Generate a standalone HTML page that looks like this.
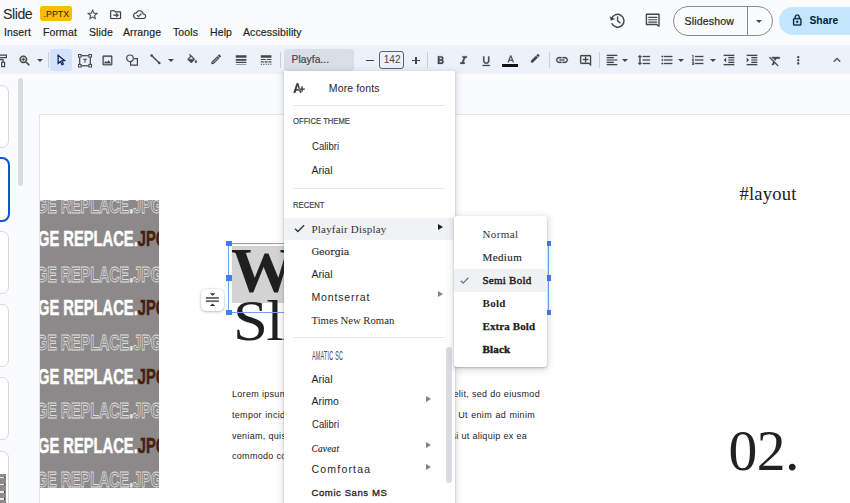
<!DOCTYPE html>
<html><head><meta charset="utf-8">
<style>
*{box-sizing:border-box;margin:0;padding:0}
html,body{width:850px;height:503px;overflow:hidden;background:#f9fbfd;font-family:"Liberation Sans",sans-serif;color:#1f1f1f}
.abs{position:absolute}
.t{position:absolute;white-space:nowrap;line-height:1}
#toolbar{left:-20px;top:45.300px;width:890px;height:28.600px;background:#edf2fa}
.sep{position:absolute;top:52px;width:1px;height:16px;background:#cbced3}
.ic{position:absolute;overflow:visible}
.menu{position:absolute;background:#fff;box-shadow:0 2px 6px 2px rgba(60,64,67,.15),0 1px 2px rgba(60,64,67,.3)}
.mi{position:absolute;left:27.5px;white-space:nowrap;line-height:1;font-size:10.5px;color:#1f1f1f}
.arr{position:absolute;width:0;height:0;border-left:5px solid #1f1f1f;border-top:3px solid transparent;border-bottom:3px solid transparent}
.arr.g{border-left-color:#80868b}
.dd{position:absolute;width:0;height:0;border-top:3.200px solid #444746;border-left:3.200px solid transparent;border-right:3.200px solid transparent;margin-left:-.3px}
.thumb{position:absolute;left:-22px;width:31px;height:63px;background:#fff;border:1px solid #d5d8dc;border-radius:7px}
.row{position:absolute;left:0;white-space:nowrap;font-weight:bold;font-size:22.5px;line-height:1;transform:scaleX(.654);transform-origin:0 0;color:#fff;-webkit-text-stroke:.5px #fff}
.row.o{color:transparent;-webkit-text-stroke:0.8px #e0e0e0;transform:scaleX(.637)}
.row b{color:#4a1e0c;-webkit-text-stroke:.5px #4a1e0c}
.h{position:absolute;width:5.600px;height:5.600px;background:#3f7fe8}
.body{position:absolute;left:232px;font-size:9px;letter-spacing:.3px;line-height:1;white-space:nowrap;text-align:justify;text-align-last:justify;color:#222}
.mn{position:absolute;top:27.2px;font-size:10.5px;letter-spacing:.12px;-webkit-text-stroke:.18px #1f1f1f;white-space:nowrap;line-height:1}
</style></head><body>

<div class="t" style="left:3px;top:6.6px;font-size:14.2px;color:#1f1f1f;letter-spacing:-.45px">Slide</div>
<div class="abs" style="left:40px;top:6px;width:32px;height:15px;background:#fbbc04;border-radius:3px"></div>
<div class="t" style="left:43.6px;top:9.9px;font-size:8.8px;color:#2a2000;letter-spacing:0">.PPTX</div>
<div class="mn" style="left:4px">Insert</div>
<div class="mn" style="left:43px">Format</div>
<div class="mn" style="left:89px">Slide</div>
<div class="mn" style="left:123px">Arrange</div>
<div class="mn" style="left:173px">Tools</div>
<div class="mn" style="left:210px">Help</div>
<div class="mn" style="left:243px">Accessibility</div>
<svg class="ic" style="left:86.30px;top:8.40px;width:13.2px;height:13.2px" viewBox="0 0 24 24"><path fill="#444746" stroke="#444746" stroke-width="0.3" d="M22 9.24l-7.19-.62L12 2 9.19 8.63 2 9.24l5.46 4.73L5.82 21 12 17.27 18.18 21l-1.63-7.03L22 9.24zM12 15.4l-3.76 2.27 1-4.28-3.32-2.88 4.38-.38L12 6.1l1.71 4.04 4.38.38-3.32 2.88 1 4.28L12 15.4z"/></svg>
<svg class="ic" style="left:109.40px;top:8.00px;width:13.2px;height:13.2px" viewBox="0 0 24 24"><path fill="#444746" stroke="#444746" stroke-width="0.3" d="M20 6h-8l-2-2H4c-1.1 0-2 .9-2 2v12c0 1.1.9 2 2 2h16c1.1 0 2-.9 2-2V8c0-1.1-.9-2-2-2zm0 12H4V6h5.17l2 2H20v10zm-7.5-2.5l1.41 1.41L17.83 13l-3.92-3.91-1.41 1.41 1.5 1.5H8v2h6l-1.500 1.500z"/></svg>
<svg class="ic" style="left:133.00px;top:8.00px;width:13.2px;height:13.2px" viewBox="0 0 24 24"><path fill="#444746" stroke="#444746" stroke-width="0.3" d="M19.35 10.04C18.67 6.59 15.64 4 12 4 9.11 4 6.6 5.64 5.35 8.04 2.34 8.36 0 10.91 0 14c0 3.31 2.69 6 6 6h13c2.76 0 5-2.24 5-5 0-2.64-2.05-4.78-4.65-4.96zM19 18H6c-2.21 0-4-1.79-4-4 0-2.05 1.53-3.76 3.56-3.97l1.07-.11.5-.95C8.08 7.14 9.94 6 12 6c2.62 0 4.88 1.86 5.39 4.43l.3 1.5 1.53.11c1.56.1 2.78 1.41 2.78 2.96 0 1.65-1.35 3-3 3zm-9-3.82l-2.09-2.09L6.5 13.5 10 17l6.01-6.01-1.41-1.41z"/></svg>
<svg class="ic" style="left:609px;top:12px;width:17px;height:17px" viewBox="0 0 17 17"><path d="M2.350 7.300A6.400 6.400 0 1 1 2.700 11.300" fill="none" stroke="#444746" stroke-width="1.500"/><path d="M.7 4.200L1.900 8.700L6 6.900z" fill="#444746"/><path d="M8.600 4.600V8.900L11.500 11.300" fill="none" stroke="#444746" stroke-width="1.400"/></svg>
<svg class="ic" style="left:645px;top:13px;width:16px;height:15px" viewBox="0 0 16 15"><path d="M1.400 1.300H14V13.200L11.700 11.500H1.400z" fill="none" stroke="#444746" stroke-width="1.400" stroke-linejoin="round"/><path d="M3.300 4.400h8.900M3.300 6.750h8.900M3.300 9.100h8.900" stroke="#444746" stroke-width="1.100"/></svg>
<div class="abs" style="left:673px;top:6px;width:100px;height:29.5px;border:1px solid #8a8d8b;border-radius:15px"></div>
<div class="abs" style="left:747px;top:6px;width:1px;height:29px;background:#8a8d8b"></div>
<div class="t" style="left:684.5px;top:15.5px;font-size:10.6px;color:#1f1f1f;letter-spacing:.15px;-webkit-text-stroke:.2px #1f1f1f">Slideshow</div>
<div class="dd" style="left:756.5px;top:19.5px"></div>
<div class="abs" style="left:779px;top:6.5px;width:100px;height:28.5px;background:#c2e7ff;border-radius:15px"></div>
<svg class="ic" style="left:791.25px;top:14.05px;width:12.5px;height:12.5px" viewBox="0 0 24 24"><path fill="#001d35" stroke="#001d35" stroke-width="0.5" d="M18 8h-1V6c0-2.76-2.24-5-5-5S7 3.24 7 6v2H6c-1.1 0-2 .9-2 2v10c0 1.1.9 2 2 2h12c1.1 0 2-.9 2-2V10c0-1.1-.9-2-2-2zM9 6c0-1.66 1.34-3 3-3s3 1.34 3 3v2H9V6zm9 14H6V10h12v10zm-6-3c1.1 0 2-.9 2-2s-.9-2-2-2-2 .9-2 2 .9 2 2 2z"/></svg>
<div class="t" style="left:809.5px;top:15.800px;font-size:10.3px;font-weight:bold;color:#001d35">Share</div>
<div id="toolbar" class="abs"></div>
<svg class="ic" style="left:0;top:53px;width:8px;height:15px" viewBox="0 0 8 15"><path d="M-2 2.100H6.400V4.700H-2" fill="none" stroke="#444746" stroke-width="1.200"/><path d="M-2 6.700H3.100V9" fill="none" stroke="#444746" stroke-width="1.200"/><rect x="1.700" y="9.300" width="2.900" height="4.300" fill="none" stroke="#444746" stroke-width="1.200"/></svg>
<svg class="ic" style="left:18.10px;top:53.50px;width:13.6px;height:13.6px" viewBox="0 0 24 24"><path fill="#444746" stroke="#444746" stroke-width="0.9" d="M15.5 14h-.79l-.28-.27C15.41 12.59 16 11.11 16 9.5 16 5.91 13.09 3 9.5 3S3 5.91 3 9.5 5.91 16 9.5 16c1.61 0 3.09-.59 4.23-1.57l.27.28v.79l5 4.99L20.49 19l-4.99-5zm-6 0C7.01 14 5 11.99 5 9.5S7.01 5 9.5 5 14 7.01 14 9.5 11.99 14 9.500 14zM12 10h-2v2H9v-2H7V9h2V7h1v2h2v1z"/></svg>
<div class="dd" style="left:37.2px;top:59px"></div>
<div class="sep" style="left:47.5px"></div>
<div class="abs" style="left:50px;top:49px;width:22px;height:21.5px;background:#d3e3fd;border-radius:3px"></div>
<svg class="ic" style="left:56.200px;top:53.300px;width:11px;height:12.830px" viewBox="0 0 12 14"><path d="M2.300 2.500V11.300L4.700 9.200L6.600 12.800L8.100 12L6.300 8.500L9.300 8.300Z" fill="none" stroke="#0b1f4a" stroke-width="1.350" stroke-linejoin="miter"/></svg>
<svg class="ic" style="left:77.5px;top:53.5px;width:14px;height:13.5px" viewBox="0 0 14 13.5"><rect x="1.7" y="1.7" width="10.6" height="10.1" fill="none" stroke="#444746" stroke-width="1.2"/><g fill="#edf2fa" stroke="#444746" stroke-width="1"><rect x=".5" y=".5" width="2.6" height="2.6"/><rect x="10.9" y=".5" width="2.6" height="2.6"/><rect x=".5" y="10.4" width="2.6" height="2.6"/><rect x="10.900" y="10.4" width="2.6" height="2.6"/></g><path d="M5.200 4.700h3.600v1H7.500v3H6.500v-3H5.200z" fill="#444746"/></svg>
<svg class="ic" style="left:101.40px;top:53.85px;width:12.9px;height:12.9px" viewBox="0 0 24 24"><path fill="#444746" stroke="#444746" stroke-width="0.5" d="M19 5v14H5V5h14m0-2H5c-1.100 0-2 .9-2 2v14c0 1.100.9 2 2 2h14c1.100 0 2-.9 2-2V5c0-1.100-.9-2-2-2zm-4.860 8.860l-3 3.870L9 13.140 6 17h12l-3.860-5.140z"/></svg>
<svg class="ic" style="left:125px;top:53px;width:14px;height:14px" viewBox="0 0 14 14"><path d="M9 5.600H12.400V12.100H5.600V9" fill="none" stroke="#444746" stroke-width="1.200"/><circle cx="5" cy="5.300" r="3.300" fill="#edf2fa" stroke="#444746" stroke-width="1.200"/></svg>
<svg class="ic" style="left:149.500px;top:54px;width:11px;height:11px" viewBox="0 0 11 11"><path d="M1.600 1.500L9.300 9.100" stroke="#444746" stroke-width="1.400"/><circle cx="1.600" cy="1.500" r="1.250" fill="#444746"/><circle cx="9.300" cy="9.100" r="1.250" fill="#444746"/></svg>
<div class="dd" style="left:168px;top:59px"></div>
<svg class="ic" style="left:185.75px;top:54.25px;width:12.5px;height:12.5px" viewBox="0 0 24 24"><path fill="#444746" stroke="#444746" stroke-width="0.5" d="M16.560 8.940L7.620 0 6.210 1.410l2.380 2.380-5.150 5.150c-.590.590-.590 1.540 0 2.120l5.500 5.500c.290.290.680.440 1.060.440s.770-.150 1.060-.440l5.500-5.500c.590-.580.590-1.530 0-2.120zM5.210 10L10 5.210 14.790 10H5.210zM19 11.500s-2 2.170-2 3.500c0 1.100.9 2 2 2s2-.9 2-2c0-1.330-2-3.500-2-3.500z"/></svg>
<svg class="ic" style="left:210.05px;top:53.35px;width:12.5px;height:12.5px" viewBox="0 0 24 24"><path fill="#444746" stroke="#444746" stroke-width="0.5" d="M14.060 9.020l.92.920L5.920 19H5v-.920l9.060-9.060M17.660 3c-.250 0-.510.100-.700.290l-1.830 1.830 3.750 3.750 1.830-1.830c.390-.390.390-1.020 0-1.410l-2.340-2.340c-.200-.200-.450-.290-.710-.290zm-3.600 3.190L3 17.250V21h3.750L17.810 9.940l-3.750-3.750z"/></svg>
<svg class="ic" style="left:233.90px;top:53.40px;width:14.2px;height:14.2px" viewBox="0 0 24 24"><path fill="#444746" stroke="#444746" stroke-width="0" d="M3 17h18v-2H3v2zm0 3h18v-1H3v1zm0-7h18v-3H3v3zm0-9v4h18V4H3z"/></svg>
<svg class="ic" style="left:258.60px;top:53.40px;width:14.2px;height:14.2px" viewBox="0 0 24 24"><path fill="#444746" stroke="#444746" stroke-width="0" d="M3 16h5v-2H3v2zm6.500 0h5v-2h-5v2zm6.500 0h5v-2h-5v2zM3 20h2v-2H3v2zm4 0h2v-2H7v2zm4 0h2v-2h-2v2zm4 0h2v-2h-2v2zm4 0h2v-2h-2v2zM3 12h8v-2H3v2zm10 0h8v-2h-8v2zM3 4v4h18V4H3z"/></svg>
<div class="sep" style="left:280px"></div>
<div class="abs" style="left:284px;top:49px;width:69.5px;height:21.5px;background:#d9dee7;border-radius:3px"></div>
<div class="t" style="left:291.5px;top:54.500px;font-size:10.2px;color:#444746;letter-spacing:.1px;-webkit-text-stroke:.2px #444746">Playfa...</div>
<div class="abs" style="left:366.3px;top:59.6px;width:8px;height:1.200px;background:#444746"></div>
<div class="abs" style="left:379px;top:51px;width:24.6px;height:17.6px;border:1px solid #5f6368;border-radius:3px"></div>
<div class="t" style="left:383.800px;top:54.800px;font-size:10px;color:#444746">142</div>
<div class="abs" style="left:412.300px;top:59.600px;width:7.400px;height:1.200px;background:#444746"></div>
<div class="abs" style="left:415.400px;top:56.500px;width:1.200px;height:7.400px;background:#444746"></div>
<div class="sep" style="left:426.500px"></div>
<svg class="ic" style="left:433.60px;top:54.00px;width:13.2px;height:13.2px" viewBox="0 0 24 24"><path fill="#444746" stroke="#444746" stroke-width="0.5" d="M15.6 10.79c.97-.67 1.65-1.77 1.65-2.79 0-2.26-1.75-4-4-4H7v14h7.040c2.090 0 3.710-1.700 3.710-3.790 0-1.520-.860-2.820-2.150-3.420zM10 6.500h3c.830 0 1.500.670 1.500 1.500s-.670 1.500-1.500 1.500h-3v-3zm3.500 9H10v-3h3.500c.830 0 1.500.670 1.500 1.500s-.670 1.500-1.500 1.500z"/></svg>
<svg class="ic" style="left:457.00px;top:54.00px;width:13.2px;height:13.2px" viewBox="0 0 24 24"><path fill="#444746" stroke="#444746" stroke-width="0.5" d="M10 4v3h2.210l-3.420 8H6v3h8v-3h-2.210l3.420-8H18V4z"/></svg>
<svg class="ic" style="left:480.25px;top:54.95px;width:12.5px;height:12.5px" viewBox="0 0 24 24"><path fill="#444746" stroke="#444746" stroke-width="0.5" d="M12 17c3.310 0 6-2.690 6-6V3h-2.500v8c0 1.930-1.570 3.500-3.500 3.500S8.500 12.930 8.500 11V3H6v8c0 3.310 2.690 6 6 6zm-7 2v2h14v-2H5z"/></svg>
<svg class="ic" style="left:504.65px;top:53.65px;width:11.5px;height:11.5px" viewBox="0 0 24 24"><path fill="#444746" stroke="#444746" stroke-width="0.5" d="M11 3L5.500 17h2.250l1.120-3h6.250l1.120 3h2.250L13 3h-2zm-1.380 9L12 5.670 14.380 12H9.620z"/></svg>
<div class="abs" style="left:502px;top:64px;width:15.5px;height:2.600px;background:#111"></div>
<svg class="ic" style="left:528.60px;top:54.00px;width:12px;height:12px" viewBox="0 0 24 24"><path fill="#444746" stroke="#444746" stroke-width="0.5" d="M17.750 7L14 3.250l-10 10V17h3.750l10-10zm2.960-2.960c.390-.390.390-1.020 0-1.410L18.370.290c-.390-.390-1.020-.390-1.410 0L15 2.250 18.750 6l1.960-1.960z"/></svg>
<div class="sep" style="left:548.500px"></div>
<svg class="ic" style="left:555.00px;top:53.20px;width:14px;height:14px" viewBox="0 0 24 24"><path fill="#444746" stroke="#444746" stroke-width="0.5" d="M3.9 12c0-1.71 1.39-3.1 3.1-3.1h4V7H7c-2.76 0-5 2.24-5 5s2.24 5 5 5h4v-1.9H7c-1.71 0-3.1-1.39-3.1-3.1zM8 13h8v-2H8v2zm9-6h-4v1.9h4c1.71 0 3.1 1.39 3.1 3.1s-1.39 3.1-3.1 3.1h-4V17h4c2.76 0 5-2.24 5-5s-2.24-5-5-5z"/></svg>
<svg class="ic" style="left:578.70px;top:54.40px;width:13.2px;height:13.2px" viewBox="0 0 24 24"><path fill="#444746" stroke="#444746" stroke-width="0.5" d="M22 4c0-1.1-.9-2-2-2H4c-1.1 0-2 .9-2 2v12c0 1.1.9 2 2 2h14l4 4V4zm-2 13.17L18.830 16H4V4h16v13.170zM13 5h-2v4H7v2h4v4h2v-4h4V9h-4z"/></svg>
<div class="sep" style="left:599.400px"></div>
<svg class="ic" style="left:604.70px;top:53.40px;width:14px;height:14px" viewBox="0 0 24 24"><path fill="#444746" stroke="#444746" stroke-width="0.2" d="M15 15H3v2h12v-2zm0-8H3v2h12V7zM3 13h18v-2H3v2zm0 8h18v-2H3v2zM3 3v2h18V3H3z"/></svg>
<div class="dd" style="left:621.800px;top:59px"></div>
<svg class="ic" style="left:636.50px;top:53.20px;width:14px;height:14px" viewBox="0 0 24 24"><path fill="#444746" stroke="#444746" stroke-width="0.5" d="M6 7h2.5L5 3.5 1.5 7H4v10H1.5L5 20.5 8.5 17H6V7zm4-2v2h12V5H10zm0 14h12v-2H10v2zm0-6h12v-2H10v2z"/></svg>
<svg class="ic" style="left:659.80px;top:53.30px;width:14px;height:14px" viewBox="0 0 24 24"><path fill="#444746" stroke="#444746" stroke-width="0.5" d="M4 10.5c-.83 0-1.5.67-1.5 1.5s.67 1.5 1.5 1.5 1.5-.67 1.5-1.5-.67-1.5-1.5-1.5zm0-6c-.83 0-1.5.67-1.5 1.5S3.17 7.5 4 7.5 5.5 6.83 5.5 6 4.83 4.5 4 4.500zm0 12c-.83 0-1.5.68-1.5 1.5s.68 1.5 1.5 1.5 1.5-.68 1.5-1.5-.67-1.5-1.5-1.500zM7 19h14v-2H7v2zm0-6h14v-2H7v2zm0-8v2h14V5H7z"/></svg>
<div class="dd" style="left:678.600px;top:59px"></div>
<svg class="ic" style="left:691.00px;top:53.30px;width:14px;height:14px" viewBox="0 0 24 24"><path fill="#444746" stroke="#444746" stroke-width="0.5" d="M2 17h2v.5H3v1h1v.5H2v1h3v-4H2v1zm1-9h1V4H2v1h1v3zm-1 3h1.8L2 13.1v.9h3v-1H3.2L5 10.9V10H2v1zm5-6v2h14V5H7zm0 14h14v-2H7v2zm0-6h14v-2H7v2z"/></svg>
<div class="dd" style="left:710.200px;top:59px"></div>
<svg class="ic" style="left:722.30px;top:53.40px;width:14px;height:14px" viewBox="0 0 24 24"><path fill="#444746" stroke="#444746" stroke-width="0.2" d="M11 17h10v-2H11v2zm-8-5l4 4V8l-4 4zm0 9h18v-2H3v2zM3 3v2h18V3H3zm8 6h10V7H11v2zm0 4h10v-2H11v2z"/></svg>
<svg class="ic" style="left:745.00px;top:53.40px;width:14px;height:14px" viewBox="0 0 24 24"><path fill="#444746" stroke="#444746" stroke-width="0.2" d="M3 21h18v-2H3v2zM3 8v8l4-4-4-4zm8 9h10v-2H11v2zM3 3v2h18V3H3zm8 6h10V7H11v2zm0 4h10v-2H11v2z"/></svg>
<svg class="ic" style="left:768.30px;top:53.70px;width:14px;height:14px" viewBox="0 0 24 24"><path fill="#444746" stroke="#444746" stroke-width="0.5" d="M3.27 5L2 6.27l6.97 6.97L6.5 19h3l1.57-3.66L16.73 21 18 19.730 3.550 5.270 3.270 5zM6 5v.18L8.820 8h2.400l-.72 1.680 2.100 2.100L14.210 8H20V5H6z"/></svg>
<svg class="ic" style="left:791.95px;top:54.05px;width:12.5px;height:12.5px" viewBox="0 0 24 24"><path fill="#444746" stroke="#444746" stroke-width="0.5" d="M12 8c1.100 0 2-.9 2-2s-.9-2-2-2-2 .9-2 2 .9 2 2 2zm0 2c-1.100 0-2 .9-2 2s.9 2 2 2 2-.9 2-2-.9-2-2-2zm0 6c-1.100 0-2 .9-2 2s.9 2 2 2 2-.9 2-2-.9-2-2-2z"/></svg>
<svg class="ic" style="left:829.80px;top:52.50px;width:14px;height:14px" viewBox="0 0 24 24"><path fill="#444746" stroke="#444746" stroke-width="0.5" d="M12 8l-6 6 1.410 1.410L12 10.830l4.590 4.580L18 14z"/></svg>
<div class="abs" style="left:39px;top:114px;width:820px;height:400px;background:#fff;border:1px solid #e3e5e8"></div>
<div class="thumb" style="top:85px"></div>
<div class="thumb" style="top:231px"></div>
<div class="thumb" style="top:304px"></div>
<div class="thumb" style="top:377px"></div>
<div class="thumb" style="top:451px"></div>
<div class="thumb" style="top:157px;height:65px;width:32px;border:2px solid #0b57d0;border-radius:8px"></div>
<div class="abs" style="left:0;top:473.500px;width:5.800px;height:30px;background:#8c8a8a"></div>
<div class="abs" style="left:0;top:476.5px;width:3.600px;height:1.600px;background:#e8e8e8"></div><div class="abs" style="left:3.600px;top:476.5px;width:1.900px;height:1.600px;background:#4a3a34"></div>
<div class="abs" style="left:0;top:483.8px;width:3.600px;height:1.600px;background:#e8e8e8"></div><div class="abs" style="left:3.600px;top:483.8px;width:1.900px;height:1.600px;background:#4a3a34"></div>
<div class="abs" style="left:0;top:491.1px;width:3.600px;height:1.600px;background:#e8e8e8"></div><div class="abs" style="left:3.600px;top:491.1px;width:1.900px;height:1.600px;background:#4a3a34"></div>
<div class="abs" style="left:0;top:498.4px;width:3.600px;height:1.600px;background:#e8e8e8"></div><div class="abs" style="left:3.600px;top:498.4px;width:1.900px;height:1.600px;background:#4a3a34"></div>
<div class="abs" style="left:18px;top:78px;width:5px;height:108px;background:#dadce0;border-radius:3px"></div>
<div class="abs" id="img" style="left:40px;top:200px;width:119px;height:288px;background:#8b8989;overflow:hidden">
<div class="row o" style="top:-4.7px;left:-3.700px">GE REPLACE<span style="color:#e0e0e0">.</span>JPG</div>
<div class="row o" style="top:63.7px;left:-3.700px">GE REPLACE<span style="color:#e0e0e0">.</span>JPG</div>
<div class="row o" style="top:132.0px;left:-3.700px">GE REPLACE<span style="color:#e0e0e0">.</span>JPG</div>
<div class="row o" style="top:200.4px;left:-3.700px">GE REPLACE<span style="color:#e0e0e0">.</span>JPG</div>
<div class="row o" style="top:268.8px;left:-3.700px">GE REPLACE<span style="color:#e0e0e0">.</span>JPG</div>
<div class="row" style="top:27.5px;left:-2.200px">GE REPLACE.<b>JPG</b></div>
<div class="row" style="top:96.8px;left:-2.200px">GE REPLACE.<b>JPG</b></div>
<div class="row" style="top:166.0px;left:-2.200px">GE REPLACE.<b>JPG</b></div>
<div class="row" style="top:235.2px;left:-2.200px">GE REPLACE.<b>JPG</b></div>
</div>
<div class="abs" style="left:231.600px;top:246px;width:240px;height:56.500px;background:#d3d3d3"></div>
<div class="t" style="left:231px;top:238.900px;font-family:'Liberation Serif',serif;font-weight:bold;font-size:64px;color:#1f1f1f">W</div>
<div class="t" style="left:233.200px;top:292.300px;font-family:'Liberation Serif',serif;font-size:57px;letter-spacing:-1.500px;transform:scaleX(1.1);transform-origin:0 0;color:#1f1f1f">Sli</div>
<div class="abs" style="left:228.050px;top:242.550px;width:320.900px;height:70.900px;border:1.800px solid #74a3ee"></div>
<div class="h" style="left:226.2px;top:240.6px"></div>
<div class="h" style="left:226.2px;top:275px"></div>
<div class="h" style="left:226.2px;top:309.7px"></div>
<div class="h" style="left:545.2px;top:240.6px"></div>
<div class="h" style="left:545.2px;top:275px"></div>
<div class="h" style="left:545.2px;top:309.7px"></div>
<div class="abs" style="left:200.500px;top:289px;width:23.800px;height:21.700px;background:#fff;border-radius:5.500px;box-shadow:0 0 0 .5px rgba(60,64,67,.12),0 1px 3px rgba(60,64,67,.3)"></div>
<svg class="ic" style="left:205px;top:292px;width:15px;height:15px" viewBox="0 0 15 15"><path d="M4.700 1.200h5.700L7.550 3.800z" fill="#333"/><path d="M4.700 14h5.700L7.550 11.400z" fill="#333"/><rect x=".9" y="5" width="13" height="1.900" fill="#6b6e70"/><rect x=".9" y="8.200" width="13" height="1.900" fill="#6b6e70"/></svg>
<div class="body" style="top:390px;width:308px">Lorem ipsum dolor sit amet, consectetur adipiscing elit, sed do eiusmod</div>
<div class="body" style="top:411px;width:303px">tempor incididunt ut labore et dolore magna aliqua. Ut enim ad minim</div>
<div class="body" style="top:431.5px;width:295px">veniam, quis nostrud exercitation ullamco laboris nisi ut aliquip ex ea</div>
<div class="body" style="top:452px;text-align-last:left">commodo consequat.</div>
<div class="t" style="left:739.500px;top:185.300px;font-family:'Liberation Serif',serif;font-size:18.600px;letter-spacing:.2px;color:#222">#layout</div>
<div class="t" style="left:728.600px;top:422.300px;font-family:'Liberation Serif',serif;font-size:57.600px;letter-spacing:-.6px;color:#222">02.</div>
<div class="menu" id="fm" style="left:284px;top:71px;width:171px;height:440px">
<svg class="ic" style="left:9px;top:10.500px;width:13px;height:12px" viewBox="0 0 13 12"><path d="M.5 10.700L3.700 1.300h1.500l3.200 9.400H7L6.300 8.500H3.100L2.400 10.700zM3.500 7.300h2.400L4.450 2.900z" fill="#333" stroke="#333" stroke-width=".3"/><path d="M6.300 6.400h2.100V4.300h1.300V6.400h2.100v1.300H9.700v2.100H8.400V7.700H6.300z" fill="#333" stroke="#fff" stroke-width=".7" paint-order="stroke"/></svg>
<div class="mi" style="left:44.800px;top:11.700px;font-size:10.5px;letter-spacing:.13px">More fonts</div>
<div class="abs" style="left:9px;top:34px;width:152px;height:1px;background:#e9e9e9"></div>
<div class="mi" style="left:9px;top:46.400px;font-size:8.300px;transform:scaleX(.925);transform-origin:0 50%;-webkit-text-stroke:.2px #444746;color:#444746">OFFICE THEME</div>
<div class="mi" style="top:70.2px;font-size:10.5px;transform:scaleX(.91);transform-origin:0 50%;">Calibri</div>
<div class="mi" style="top:94.2px;font-size:10.5px;">Arial</div>
<div class="abs" style="left:9px;top:117px;width:152px;height:1px;background:#e9e9e9"></div>
<div class="mi" style="left:9px;top:129.600px;font-size:8.300px;transform:scaleX(.925);transform-origin:0 50%;-webkit-text-stroke:.2px #444746;color:#444746">RECENT</div>
<div class="abs" style="left:0;top:147.200px;width:171px;height:21.600px;background:#f0f2f3"></div>
<svg class="ic" style="left:8.70px;top:151.10px;width:13px;height:13px" viewBox="0 0 24 24"><path fill="#1f1f1f" stroke="#1f1f1f" stroke-width="0.5" d="M9 16.170L4.830 12l-1.420 1.410L9 19 21 7l-1.410-1.410z"/></svg>
<div class="mi" style="top:152.5px;font-size:11px;font-family:'Liberation Serif',serif;letter-spacing:.2px;color:#333;">Playfair Display</div><div class="arr " style="left:154px;top:153.0px"></div>
<div class="mi" style="top:175.8px;font-size:9.4px;font-family:'DejaVu Serif',serif;-webkit-text-stroke:.15px #1f1f1f;">Georgia</div>
<div class="mi" style="top:198.2px;font-size:10.5px;">Arial</div>
<div class="mi" style="top:221.1px;font-size:10.5px;letter-spacing:.85px;">Montserrat</div><div class="arr g" style="left:154px;top:220.4px"></div>
<div class="mi" style="top:244.2px;font-size:10.7px;font-family:'Liberation Serif',serif;">Times New Roman</div>
<div class="abs" style="left:9px;top:265.5px;width:152px;height:1px;background:#e9e9e9"></div>
<div class="mi" style="top:278.8px;font-size:12.5px;transform:scaleX(.43);transform-origin:0 50%;letter-spacing:.6px;font-weight:normal;color:#444;">AMATIC SC</div>
<div class="mi" style="top:303.2px;font-size:10.5px;">Arial</div>
<div class="mi" style="top:325.2px;font-size:10.5px;">Arimo</div><div class="arr g" style="left:141.7px;top:324.8px"></div>
<div class="mi" style="top:348.2px;font-size:10.5px;transform:scaleX(.91);transform-origin:0 50%;">Calibri</div>
<div class="mi" style="top:373.5px;font-size:9.3px;font-style:italic;font-family:'Liberation Serif',serif;-webkit-text-stroke:.15px #1f1f1f;letter-spacing:.25px;">Caveat</div><div class="arr g" style="left:141.7px;top:370.7px"></div>
<div class="mi" style="top:392.9px;font-size:10.5px;letter-spacing:1.2px;">Comfortaa</div><div class="arr g" style="left:141.7px;top:393.0px"></div>
<div class="mi" style="top:416.5px;font-size:9.6px;letter-spacing:.55px;-webkit-text-stroke:.3px #1f1f1f;">Comic Sans MS</div>
<div class="abs" style="left:162px;top:276px;width:6px;height:136px;background:#dadce0;border-radius:3px"></div>
</div>
<div class="menu" id="sm" style="left:454px;top:216px;width:93px;height:151px;border-radius:3px">
<div class="abs" style="left:0;top:53px;width:93px;height:23px;background:#f0f1f2"></div>
<svg class="ic" style="left:4.50px;top:59.00px;width:11px;height:11px" viewBox="0 0 24 24"><path fill="#5f6368" stroke="#5f6368" stroke-width="0.5" d="M9 16.170L4.830 12l-1.420 1.410L9 19 21 7l-1.410-1.410z"/></svg>
<div class="mi" style="left:28.5px;top:12.9px;font-family:'Liberation Serif',serif;font-size:11px;letter-spacing:0.4px;font-weight:normal;color:#333">Normal</div>
<div class="mi" style="left:28.5px;top:35.8px;font-family:'Liberation Serif',serif;font-size:11px;letter-spacing:0.4px;font-weight:normal;-webkit-text-stroke:.15px #1f1f1f">Medium</div>
<div class="mi" style="left:28.5px;top:59.0px;font-family:'Liberation Serif',serif;font-size:11px;letter-spacing:0.25px;font-weight:normal;-webkit-text-stroke:.45px #1f1f1f">Semi Bold</div>
<div class="mi" style="left:28.5px;top:82.3px;font-family:'Liberation Serif',serif;font-size:11px;letter-spacing:0.3px;font-weight:bold;">Bold</div>
<div class="mi" style="left:28.5px;top:105.2px;font-family:'Liberation Serif',serif;font-size:11px;letter-spacing:0.1px;font-weight:bold;-webkit-text-stroke:.25px #1f1f1f">Extra Bold</div>
<div class="mi" style="left:28.5px;top:128.2px;font-family:'Liberation Serif',serif;font-size:11px;letter-spacing:0.2px;font-weight:bold;-webkit-text-stroke:.45px #1f1f1f">Black</div>
</div>
</body></html>
